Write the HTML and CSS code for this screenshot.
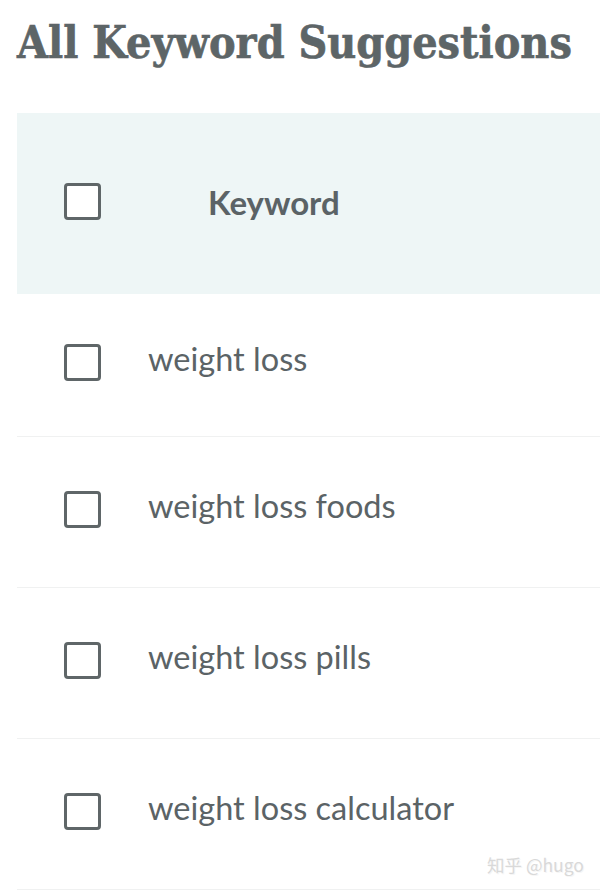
FILE: index.html
```html
<!DOCTYPE html>
<html>
<head>
<meta charset="utf-8">
<link rel="stylesheet" href="styles.css">
</head>
<body>
<div class="page">
  <h1 class="title">All Keyword Suggestions</h1>
  <div class="table">
    <div class="head">
      <span class="box"></span>
      <span class="head-label">Keyword</span>
    </div>
    <div class="row row-first"><span class="box"></span><span class="kw">weight loss</span></div>
    <div class="row"><span class="box"></span><span class="kw">weight loss foods</span></div>
    <div class="row"><span class="box"></span><span class="kw">weight loss pills</span></div>
    <div class="row"><span class="box"></span><span class="kw">weight loss calculator</span></div>
  </div>
  <div class="watermark">知乎 @hugo</div>
</div>
</body>
</html>
```
FILE: styles.css
```css
html, body {
  margin: 0;
  padding: 0;
  background: #ffffff;
}
.page {
  position: relative;
  width: 600px;
  height: 891px;
  overflow: hidden;
  padding-left: 17px;
  box-sizing: border-box;
}
.title {
  margin: 0;
  padding-top: 14px;
  height: 113px;
  box-sizing: border-box;
  font-family: "DejaVu Serif Condensed", "DejaVu Serif", serif;
  font-weight: bold;
  font-size: 44.4px;
  line-height: 56px;
  color: #5d6567;
  white-space: nowrap;
  -webkit-text-stroke: 0.6px #5d6567;
}
.table {
  display: flex;
  flex-direction: column;
}
.head {
  height: 181px;
  background: #eef6f6;
  display: flex;
  align-items: center;
  padding-left: 47px;
  padding-bottom: 4px;
  box-sizing: border-box;
}
.head-label {
  margin-left: 107px;
  font-family: Lato, sans-serif;
  font-weight: bold;
  font-size: 33px;
  color: #5b6366;
}
.box {
  width: 37px;
  height: 37px;
  box-sizing: border-box;
  border: 3px solid #5f6668;
  border-radius: 4px;
  background: #fff;
  flex: none;
}
.row {
  height: 151px;
  display: flex;
  align-items: center;
  padding-left: 47px;
  padding-bottom: 6px;
  box-sizing: border-box;
  border-bottom: 1.5px solid #f0f1f1;
}
.row-first {
  height: 143px;
}
.kw {
  margin-left: 47px;
  margin-bottom: 8px;
  font-family: Lato, sans-serif;
  font-size: 32.5px;
  color: #5b6366;
}
.watermark {
  position: absolute;
  left: 487px;
  top: 852px;
  font-family: "Noto Sans CJK SC", sans-serif;
  font-size: 17.5px;
  color: #d9d9d9;
  text-shadow: 1px 1px 0 #f6f6f6;
}
```
